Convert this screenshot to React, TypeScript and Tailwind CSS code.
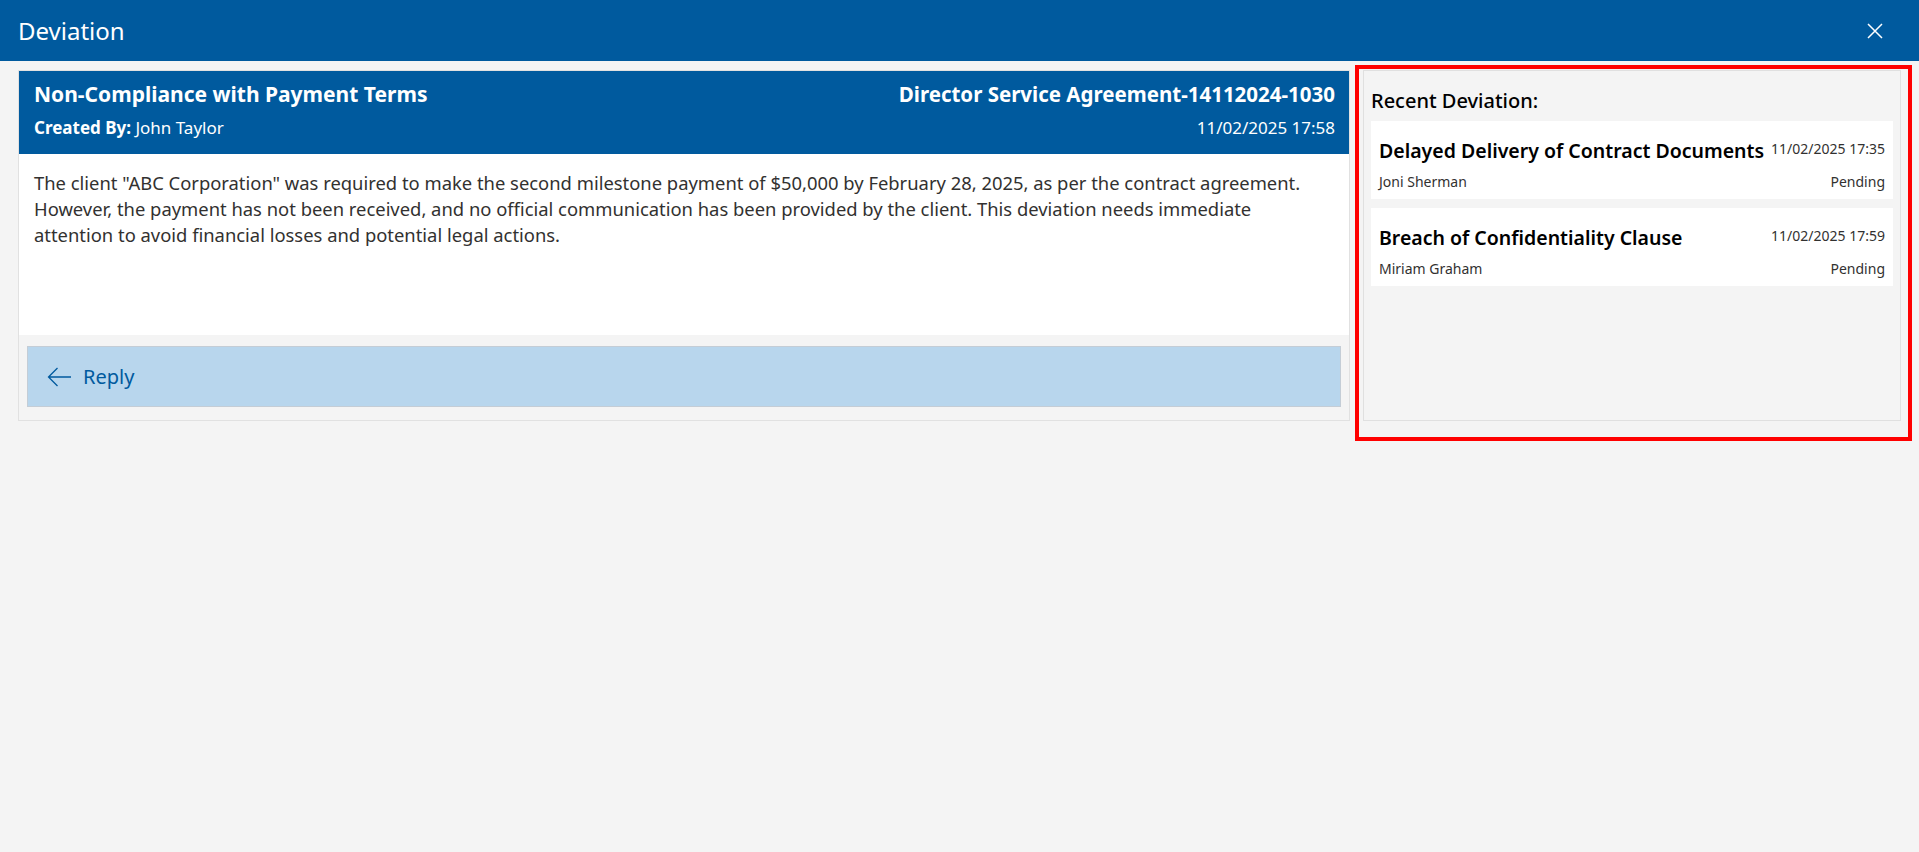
const recent = [
  {
    title: "Delayed Delivery of Contract Documents",
    date: "11/02/2025 17:35",
    by: "Joni Sherman",
    status: "Pending",
  },
  {
    title: "Breach of Confidentiality Clause",
    date: "11/02/2025 17:59",
    by: "Miriam Graham",
    status: "Pending",
  },
];

function CloseIcon() {
  return (
    <svg width="16" height="16" viewBox="0 0 16 16" fill="none" stroke="currentColor" strokeWidth="1.5">
      <path d="M1 1L15 15M15 1L1 15" />
    </svg>
  );
}

function BackArrow() {
  return (
    <svg width="24" height="20" viewBox="0 0 24 20" fill="none" stroke="currentColor" strokeWidth="1.3">
      <path d="M24 10H1.5M10.5 1L1.5 10L10.5 19" />
    </svg>
  );
}

export default function App() {
  return (
    <div className="min-h-screen bg-[#f4f4f4] font-['Noto_Sans','Open_Sans',sans-serif] text-[#323130]">
      <header className="flex h-[61px] items-center justify-between bg-[#005a9e] pl-[18px] pr-[36px] text-white">
        <h1 className="text-[24px] leading-[30px]">Deviation</h1>
        <CloseIcon />
      </header>

      <div className="flex items-start pl-[18px] pr-[7px] pt-[4px]">
        {/* main deviation card */}
        <div className="mt-[5px] w-[1332px] shrink-0 border border-[#e1e1e1]">
          <div className="flex h-[83px] justify-between bg-[#005a9e] pl-[15px] pr-[14px] pt-[9px] text-white">
            <div className="flex flex-col gap-[8px]">
              <p className="text-[21px] font-bold leading-[28px]">Non-Compliance with Payment Terms</p>
              <p className="text-[17px] leading-[24px]">
                <span className="font-bold">Created By:</span> John Taylor
              </p>
            </div>
            <div className="flex flex-col items-end gap-[8px]">
              <p className="text-[20.5px] font-bold leading-[28px]">Director Service Agreement-14112024-1030</p>
              <p className="text-[17px] leading-[24px]">11/02/2025 17:58</p>
            </div>
          </div>

          <div className="h-[181px] bg-white pl-[15px] pr-[30px] pt-[16px] text-[18.4px] leading-[26px]">
            The client "ABC Corporation" was required to make the second milestone payment of $50,000 by February
            28, 2025, as per the contract agreement. However, the payment has not been received, and no official
            communication has been provided by the client. This deviation needs immediate attention to avoid
            financial losses and potential legal actions.
          </div>

          <div className="px-[8px] pb-[13px] pt-[11px]">
            <button className="flex h-[61px] w-full items-center gap-[12px] border border-[#c4cdd6] bg-[#b8d6ed] pl-[19px] text-[#005a9e]">
              <BackArrow />
              <span className="text-[20px] leading-[26px]">Reply</span>
            </button>
          </div>
        </div>

        {/* recent deviations */}
        <div className="ml-[5px] flex-1 border-4 border-[#ff0000] pb-[16px] pl-[4px] pr-[7px] pt-[1px]">
          <div className="h-[351px] border border-[#e0e0e0] bg-[#f4f4f4] px-[7px] pt-[18px]">
            <h3 className="mb-[8px] text-[20px] font-medium leading-[24px] text-black">Recent Deviation:</h3>
            <div className="flex flex-col gap-[9px]">
              {recent.map((r) => (
                <div key={r.title} className="bg-white px-[8px] pb-[8px] pt-[17px] text-black">
                  <div className="flex items-start justify-between gap-[2px]">
                    <p className="whitespace-nowrap text-[19.5px] font-semibold leading-[26px]">{r.title}</p>
                    <p className="whitespace-nowrap pt-[2px] text-[14px] leading-[18px] text-[#323130]">{r.date}</p>
                  </div>
                  <div className="mt-[9px] flex justify-between text-[14px] leading-[18px] text-[#323130]">
                    <span>{r.by}</span>
                    <span>{r.status}</span>
                  </div>
                </div>
              ))}
            </div>
          </div>
        </div>
      </div>
    </div>
  );
}
